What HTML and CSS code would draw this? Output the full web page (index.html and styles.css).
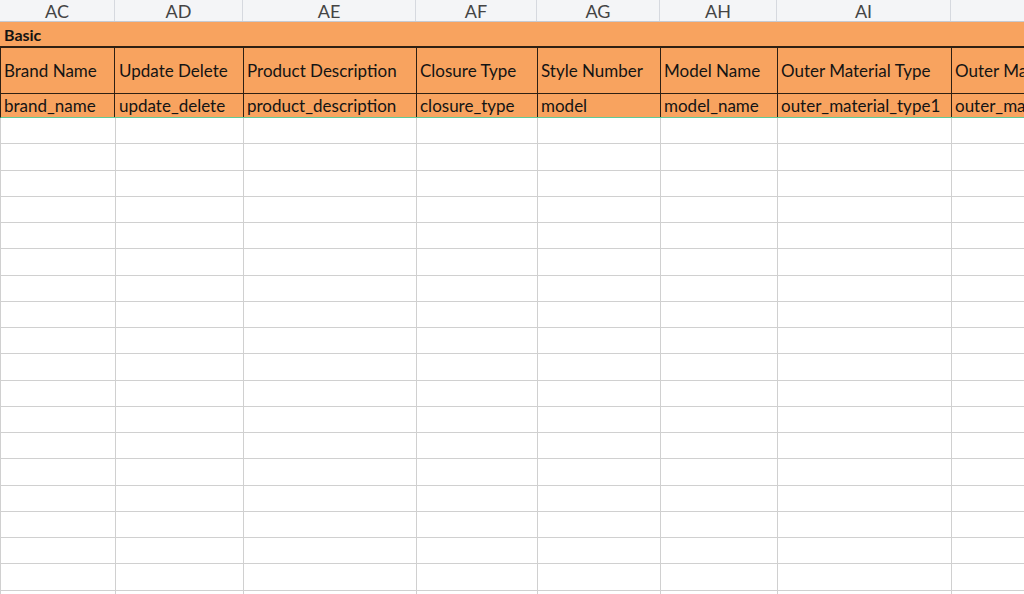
FILE: index.html
```html
<!DOCTYPE html>
<html>
<head>
<meta charset="utf-8">
<link rel="stylesheet" href="styles.css">
</head>
<body>
<div class="sheet">
  <div class="row colhdr">
    <div class="c">AC</div><div class="c">AD</div><div class="c">AE</div><div class="c">AF</div><div class="c">AG</div><div class="c">AH</div><div class="c">AI</div><div class="c"></div>
  </div>
  <div class="section">Basic</div>
  <div class="row labels">
    <div class="c">Brand Name</div><div class="c">Update Delete</div><div class="c">Product Description</div><div class="c">Closure Type</div><div class="c">Style Number</div><div class="c">Model Name</div><div class="c">Outer Material Type</div><div class="c">Outer Material</div>
  </div>
  <div class="row keys">
    <div class="c">brand_name</div><div class="c">update_delete</div><div class="c">product_description</div><div class="c">closure_type</div><div class="c">model</div><div class="c">model_name</div><div class="c">outer_material_type1</div><div class="c">outer_material_type2</div>
  </div>
  <div class="blank">
    <div></div><div></div><div></div><div></div><div></div><div></div><div></div><div></div>
    <div></div><div></div><div></div><div></div><div></div><div></div><div></div><div></div>
    <div></div><div></div><div></div><div></div><div></div><div></div><div></div><div></div>
    <div></div><div></div><div></div><div></div><div></div><div></div><div></div><div></div>
    <div></div><div></div><div></div><div></div><div></div><div></div><div></div><div></div>
    <div></div><div></div><div></div><div></div><div></div><div></div><div></div><div></div>
    <div></div><div></div><div></div><div></div><div></div><div></div><div></div><div></div>
    <div></div><div></div><div></div><div></div><div></div><div></div><div></div><div></div>
    <div></div><div></div><div></div><div></div><div></div><div></div><div></div><div></div>
    <div></div><div></div><div></div><div></div><div></div><div></div><div></div><div></div>
    <div></div><div></div><div></div><div></div><div></div><div></div><div></div><div></div>
    <div></div><div></div><div></div><div></div><div></div><div></div><div></div><div></div>
    <div></div><div></div><div></div><div></div><div></div><div></div><div></div><div></div>
    <div></div><div></div><div></div><div></div><div></div><div></div><div></div><div></div>
    <div></div><div></div><div></div><div></div><div></div><div></div><div></div><div></div>
    <div></div><div></div><div></div><div></div><div></div><div></div><div></div><div></div>
    <div></div><div></div><div></div><div></div><div></div><div></div><div></div><div></div>
    <div></div><div></div><div></div><div></div><div></div><div></div><div></div><div></div>
    <div></div><div></div><div></div><div></div><div></div><div></div><div></div><div></div>
  </div>
</div>
</body>
</html>
```
FILE: styles.css
```css
html, body {
  margin: 0;
  padding: 0;
  background: #ffffff;
  overflow: hidden;
}
.sheet {
  width: 1024px;
  height: 594px;
  overflow: hidden;
  font-family: "Lato", "Liberation Sans", sans-serif;
  font-size: 17px;
  color: #141414;
}
.row, .blank {
  display: grid;
  grid-template-columns: 115px 128px 173px 121px 123px 117px 174px 200px;
  width: 1151px;
}
.c {
  display: flex;
  align-items: center;
  white-space: nowrap;
  overflow: hidden;
  box-sizing: border-box;
}
.colhdr {
  height: 22px;
  background: #f4f5f7;
  border-bottom: 1px solid #c6cad2;
  box-sizing: border-box;
  color: #444444;
  font-size: 18px;
}
.colhdr .c {
  justify-content: center;
  border-right: 1px solid #d6d9df;
}
.section {
  height: 24px;
  background: #f8a35f;
  font-weight: 700;
  font-size: 16px;
  display: flex;
  align-items: center;
  padding-left: 4px;
}
.labels, .keys {
  background: #f8a35f;
  border-left: 1px solid #2e2013;
}
.labels {
  height: 48px;
  border-top: 2px solid #2e2013;
  border-bottom: 1px solid #2e2013;
  box-sizing: border-box;
}
.keys {
  height: 24px;
  border-bottom: 1px solid #5ecb97;
  box-sizing: border-box;
}
.labels .c, .keys .c {
  border-right: 1px solid #2e2013;
  padding-left: 3px;
}
.labels .c:first-child, .keys .c:first-child {
  width: 114px;
}
.blank {
  grid-auto-rows: 26.25px;
  border-left: 1px solid #d0d0d0;
}
.blank div {
  border-right: 1px solid #d0d0d0;
  border-bottom: 1px solid #d0d0d0;
}
.blank div:nth-child(8n+1) {
  width: 114px;
}
```
